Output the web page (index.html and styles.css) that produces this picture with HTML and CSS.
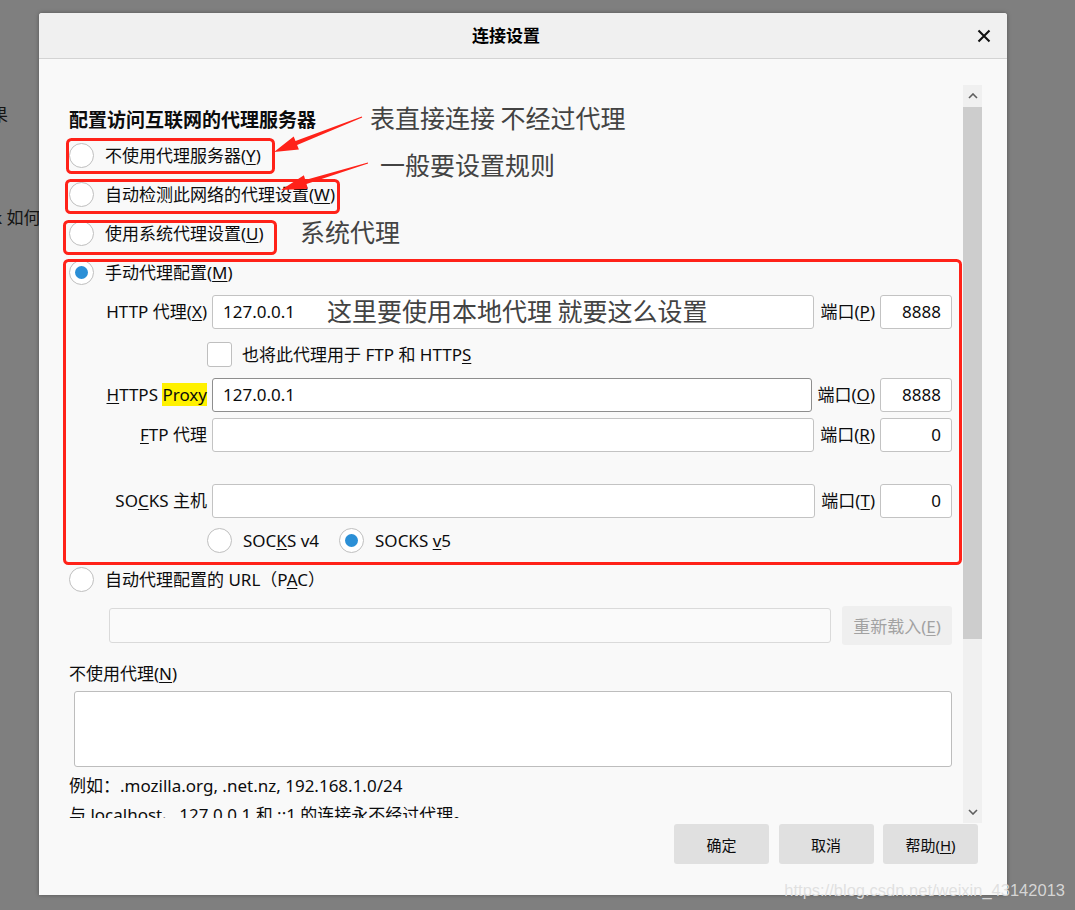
FILE: index.html
```html
<!DOCTYPE html>
<html lang="zh-CN">
<head>
<meta charset="utf-8">
<title>连接设置</title>
<link rel="stylesheet" href="styles.css">
</head>
<body>
<div class="backdrop">
  <p class="bg-line bg-line-1">果</p>
  <p class="bg-line bg-line-2">k 如何</p>
</div>

<div class="dialog">
  <div class="titlebar">
    <div class="title">连接设置</div>
    <button class="close" type="button" aria-label="关闭">
      <svg width="14" height="14" viewBox="0 0 14 14"><path d="M1.5 1.5 L12.5 12.5 M12.5 1.5 L1.5 12.5" stroke="#111" stroke-width="2.1" fill="none"/></svg>
    </button>
  </div>

  <div class="dlg-body">
    <div class="scroller">
      <div class="content">
        <h2 class="heading">配置访问互联网的代理服务器</h2>
        <div class="opt"><span class="radio"></span><span>不使用代理服务器(<u>Y</u>)</span></div>
        <div class="opt"><span class="radio"></span><span>自动检测此网络的代理设置(<u>W</u>)</span></div>
        <div class="opt"><span class="radio"></span><span>使用系统代理设置(<u>U</u>)</span></div>
        <div class="opt"><span class="radio checked"></span><span>手动代理配置(<u>M</u>)</span></div>

        <div class="manual">
          <div class="field">
            <span class="lbl">HTTP 代理(<u>X</u>)</span>
            <div class="input">127.0.0.1</div>
            <span class="port-lbl">端口(<u>P</u>)</span>
            <div class="input port">8888</div>
          </div>
          <div class="check-row">
            <span class="check"></span>
            <span>也将此代理用于 FTP 和 HTTP<u>S</u></span>
          </div>
          <div class="field field-https">
            <span class="lbl"><u>H</u>TTPS <mark class="hl">Proxy</mark></span>
            <div class="input strong">127.0.0.1</div>
            <span class="port-lbl">端口(<u>O</u>)</span>
            <div class="input port">8888</div>
          </div>
          <div class="field field-ftp">
            <span class="lbl"><u>F</u>TP 代理</span>
            <div class="input"></div>
            <span class="port-lbl">端口(<u>R</u>)</span>
            <div class="input port">0</div>
          </div>
          <div class="field field-socks">
            <span class="lbl">SO<u>C</u>KS 主机</span>
            <div class="input"></div>
            <span class="port-lbl">端口(<u>T</u>)</span>
            <div class="input port">0</div>
          </div>
          <div class="socks-row">
            <span class="radio"></span><span>SOC<u>K</u>S v4</span>
            <span class="radio checked v5"></span><span>SOCKS <u>v</u>5</span>
          </div>
        </div>

        <div class="opt opt-pac"><span class="radio"></span><span>自动代理配置的 URL（P<u>A</u>C）</span></div>
        <div class="pac-row">
          <div class="input disabled"></div>
          <button class="reload" type="button">重新载入(<u>E</u>)</button>
        </div>

        <p class="text-line no-proxy">不使用代理(<u>N</u>)</p>
        <div class="textarea"></div>
        <p class="text-line example">例如：.mozilla.org, .net.nz, 192.168.1.0/24</p>
        <p class="text-line local">与 localhost、127.0.0.1 和 ::1 的连接永不经过代理。</p>
      </div>

      <div class="scrollbar">
        <div class="sb-btn">
          <svg width="10" height="6" viewBox="0 0 10 6"><path d="M1 5 L5 1 L9 5" stroke="#5e5e5e" stroke-width="1.6" fill="none"/></svg>
        </div>
        <div class="sb-thumb"></div>
        <div class="sb-track"></div>
        <div class="sb-btn">
          <svg width="10" height="6" viewBox="0 0 10 6"><path d="M1 1 L5 5 L9 1" stroke="#5e5e5e" stroke-width="1.6" fill="none"/></svg>
        </div>
      </div>
    </div>

    <div class="footer">
      <button class="btn" type="button">确定</button>
      <button class="btn" type="button">取消</button>
      <button class="btn" type="button">帮助(<u>H</u>)</button>
    </div>
  </div>
</div>

<div class="annot">
  <svg class="annot-svg" width="1075" height="910" viewBox="0 0 1075 910">
    <g fill="none" stroke="#ff2219" stroke-width="3">
      <rect x="67.5" y="139.5" width="206" height="33" rx="4"/>
      <rect x="66.5" y="180.5" width="272" height="32" rx="4"/>
      <rect x="64.5" y="221.5" width="211" height="32" rx="4"/>
      <rect x="64.5" y="260.5" width="896" height="303" rx="4"/>
    </g>
    <g fill="#ff2219">
      <polygon points="361.8,116.5 295.5,141.1 293.7,136.6 274,152 298.9,149.6 297.1,145.1 362.2,117.5"/>
      <polygon points="367.9,162.5 305.3,179.9 303.9,175.3 281,190 307.9,188.7 306.5,184.1 368.1,163.5"/>
    </g>
  </svg>
  <span class="note note-1">表直接连接 不经过代理</span>
  <span class="note note-2">一般要设置规则</span>
  <span class="note note-3">系统代理</span>
  <span class="note note-4">这里要使用本地代理 就要这么设置</span>
</div>

<div class="watermark">https://blog.csdn.net/weixin_43142013</div>
</body>
</html>
```

FILE: styles.css
```css
* { box-sizing: border-box; }

html, body { margin: 0; padding: 0; }

body {
  position: relative;
  width: 1075px;
  height: 910px;
  overflow: hidden;
  background: #7f7f7f;
  font-family: "Noto Sans", "Noto Sans CJK SC", sans-serif;
  color: #0c0c0d;
}

u { text-decoration: underline; text-underline-offset: 2px; }

/* page behind the dialog */
.backdrop { padding-top: 103px; }
.bg-line {
  margin: 0;
  font-size: 17px;
  line-height: 24px;
  color: #141414;
  white-space: nowrap;
}
.bg-line-1 { margin-left: -9px; }
.bg-line-2 { margin-top: 79px; margin-left: -7px; }

/* dialog window */
.dialog {
  position: absolute;
  left: 39px;
  top: 13px;
  width: 968px;
  height: 882px;
  background: #f9f9f9;
  border-radius: 3px 3px 0 0;
  box-shadow: 0 0 4px rgba(0, 0, 0, 0.35);
  display: flex;
  flex-direction: column;
}

.titlebar {
  flex: none;
  height: 46px;
  background: #f0f0f0;
  border-bottom: 1px solid #d3d3d3;
  border-radius: 3px 3px 0 0;
  display: flex;
  align-items: center;
  padding-right: 12px;
}
.title {
  flex: 1;
  text-align: center;
  font-size: 17px;
  font-weight: 700;
  line-height: 24px;
  color: #000;
}
.close {
  width: 22px;
  height: 22px;
  border: 0;
  padding: 0;
  background: none;
  display: flex;
  align-items: center;
  justify-content: center;
}

.dlg-body {
  flex: 1;
  display: flex;
  flex-direction: column;
  padding-top: 26px;
}

.scroller {
  flex: none;
  height: 738px;
  margin-right: 25px;
  display: flex;
  align-items: flex-start;
}

.content {
  flex: 1;
  height: 733px;
  overflow: hidden;
  padding: 23px 11px 0 30px;
  font-size: 17px;
  line-height: 24px;
}

.heading {
  margin: 0 0 4px;
  font-size: 19px;
  line-height: 24px;
  font-weight: 700;
  color: #0c0c0d;
}

.opt {
  height: 39px;
  display: flex;
  align-items: center;
  gap: 11px;
  white-space: nowrap;
}

.radio {
  flex: none;
  width: 25px;
  height: 25px;
  border-radius: 50%;
  border: 1px solid #bfbfbf;
  background: #fff;
  display: flex;
  align-items: center;
  justify-content: center;
}
.radio.checked::after {
  content: "";
  width: 13px;
  height: 13px;
  border-radius: 50%;
  background: #2b8fd6;
}

/* manual proxy fields */
.manual { margin-top: 3px; }

.field {
  height: 34px;
  display: flex;
  align-items: center;
  white-space: nowrap;
}
.field-https { margin-top: 11px; }
.field-ftp { margin-top: 6px; }
.field-socks { margin-top: 32px; }

.lbl {
  flex: none;
  width: 138px;
  margin-right: 5px;
  text-align: right;
}
.hl {
  background: #fff100;
  color: inherit;
}

.input {
  flex: 1;
  height: 34px;
  background: #fff;
  border: 1px solid #c3c3c3;
  border-radius: 3px;
  padding: 0 10px;
  display: flex;
  align-items: center;
}
.input.strong { border-color: #8e8e8e; }
.input.port {
  flex: none;
  width: 72px;
  justify-content: flex-end;
}
.port-lbl { margin: 0 5px 0 6px; }

.check-row {
  margin-top: 13px;
  height: 25px;
  padding-left: 138px;
  display: flex;
  align-items: center;
  gap: 10px;
  white-space: nowrap;
}
.check {
  flex: none;
  width: 25px;
  height: 25px;
  border: 1px solid #bfbfbf;
  border-radius: 3px;
  background: #fff;
}

.socks-row {
  margin-top: 10px;
  height: 25px;
  padding-left: 138px;
  display: flex;
  align-items: center;
  gap: 11px;
  white-space: nowrap;
}
.socks-row .v5 { margin-left: 9px; }

/* PAC */
.opt-pac { margin-top: 7px; }
.pac-row {
  margin-top: 6px;
  height: 40px;
  padding-left: 40px;
  display: flex;
  align-items: center;
  gap: 11px;
}
.input.disabled {
  height: 35px;
  background: #fafafa;
  border-color: #dadada;
}
.reload {
  flex: none;
  width: 110px;
  height: 39px;
  border: 0;
  border-radius: 3px;
  background: #efefef;
  color: #a2a2a2;
  font-family: inherit;
  font-size: 17px;
  padding: 0;
}

.text-line { margin: 0; white-space: nowrap; }
.no-proxy { margin-top: 17px; }
.textarea {
  margin: 5px 0 0 5px;
  height: 76px;
  background: #fff;
  border: 1px solid #bdbdbd;
  border-radius: 3px;
}
.example { margin-top: 7px; }
.local { margin-top: 5px; }

/* scrollbar */
.scrollbar {
  flex: none;
  width: 19px;
  height: 738px;
  background: #f0f0f0;
  display: flex;
  flex-direction: column;
}
.sb-btn {
  flex: none;
  height: 22px;
  display: flex;
  align-items: center;
  justify-content: center;
}
.sb-thumb {
  flex: none;
  height: 532px;
  background: #cdcdcd;
}
.sb-track { flex: 1; }

/* footer buttons */
.footer {
  display: flex;
  justify-content: flex-end;
  gap: 9.5px;
  padding: 1px 29px 0 0;
}
.btn {
  width: 95px;
  height: 40px;
  border: 0;
  border-radius: 3px;
  background: #e0e0e0;
  color: #0c0c0d;
  font-family: inherit;
  font-size: 15px;
  padding: 0;
}

/* hand-drawn annotations over the screenshot */
.annot {
  position: absolute;
  left: 0;
  top: 0;
  width: 1075px;
  height: 910px;
  pointer-events: none;
}
.annot-svg { position: absolute; left: 0; top: 0; }
.note {
  position: absolute;
  font-family: "Noto Sans CJK SC", "Noto Sans", sans-serif;
  font-size: 25px;
  line-height: 25px;
  color: #434343;
  white-space: nowrap;
}
.note-1 { left: 370px; top: 105px; }
.note-2 { left: 380px; top: 152px; }
.note-3 { left: 300px; top: 219px; }
.note-4 { left: 327px; top: 298px; }

.watermark {
  position: absolute;
  right: 10px;
  top: 879px;
  font-family: "Liberation Sans", Arial, sans-serif;
  font-size: 16.5px;
  line-height: 22px;
  color: rgba(222, 222, 222, 0.92);
  white-space: nowrap;
}
```
